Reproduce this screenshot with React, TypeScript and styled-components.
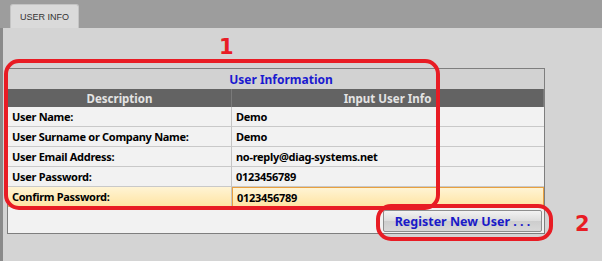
import React from 'react';
import styled, { createGlobalStyle } from 'styled-components';

const GlobalStyle = createGlobalStyle`
  html, body {
    margin: 0;
    padding: 0;
    background: #d4d4d4;
  }
`;

const rows = [
  { label: 'User Name:', value: 'Demo' },
  { label: 'User Surname or Company Name:', value: 'Demo' },
  { label: 'User Email Address:', value: 'no-reply@diag-systems.net' },
  { label: 'User Password:', value: '0123456789' },
  { label: 'Confirm Password:', value: '0123456789', active: true },
];

const Page = styled.div`
  position: relative;
  width: 602px;
  height: 261px;
  display: flex;
  flex-direction: column;
  background: #9d9d9d;
  font-family: 'Noto Sans', 'Open Sans', sans-serif;
  overflow: hidden;
`;

const TabBar = styled.div`
  height: 28px;
  display: flex;
  align-items: flex-end;
  padding-left: 10px;
  box-sizing: border-box;
`;

const Tab = styled.div`
  width: 69px;
  height: 24px;
  box-sizing: border-box;
  display: flex;
  align-items: center;
  justify-content: center;
  background: #dadada;
  border: 1px solid #c4c4c4;
  border-bottom: none;
  border-radius: 3px 3px 0 0;
  font-family: 'Liberation Sans', Arial, sans-serif;
  font-size: 9px;
  color: #333;
  padding-top: 1px;
`;

const Body = styled.div`
  flex: 1;
  background: #d4d4d4;
  border-left: 3px solid #8a8a8a;
  padding: 40px 0 0 4px;
`;

const Table = styled.div`
  width: 538px;
  box-sizing: border-box;
  border: 1px solid #7e7e7e;
  background: #f2f2f2;
`;

const TitleRow = styled.div`
  height: 20px;
  display: flex;
  align-items: center;
  justify-content: center;
  background: #d2d2d2;
  color: #1a1ad0;
  font-weight: bold;
  font-size: 12px;
  padding-left: 10px;
`;

const Grid = styled.div`
  display: grid;
  grid-template-columns: 224px 1fr;
`;

const HeadCell = styled.div`
  height: 18px;
  display: flex;
  align-items: center;
  justify-content: center;
  background: #636363;
  color: #e4e4e4;
  font-weight: bold;
  font-size: 11.5px;
  border-right: 1px solid #7a7a7a;
  &:last-child {
    border-right: none;
  }
`;

const Cell = styled.div<{ $active?: boolean; $value?: boolean }>`
  height: 20px;
  box-sizing: border-box;
  display: flex;
  align-items: center;
  padding-left: 4px;
  font-weight: bold;
  font-size: 11px;
  letter-spacing: -0.3px;
  color: #000;
  border-bottom: 1px solid ${(p) => (p.$active ? '#e2b870' : '#c9c9c9')};
  border-right: ${(p) => (p.$value ? 'none' : '1px solid #c4c4c4')};
  background: ${(p) =>
    p.$active ? 'linear-gradient(#fff4d4, #ffe4a4)' : '#f2f2f2'};
  ${(p) => (p.$active && p.$value ? 'border: 1px solid #e8a040;' : '')}
`;

const Footer = styled.div`
  height: 26px;
  display: flex;
  justify-content: flex-end;
  align-items: flex-start;
  padding: 3px 2px 0 0;
  box-sizing: border-box;
`;

const Button = styled.button`
  width: 159px;
  height: 22px;
  border: 1px solid #8e8e8e;
  border-radius: 2px;
  background: linear-gradient(#f2f2f2, #dcdcdc 50%, #cdcdcd 51%, #d8d8d8);
  color: #1a1ac8;
  font-family: 'Noto Sans', 'Open Sans', sans-serif;
  font-weight: bold;
  font-size: 12.5px;
  padding: 0;
`;

const Mark = styled.div<{ $l: number; $t: number; $w: number; $h: number }>`
  position: absolute;
  left: ${(p) => p.$l}px;
  top: ${(p) => p.$t}px;
  width: ${(p) => p.$w}px;
  height: ${(p) => p.$h}px;
  box-sizing: border-box;
  border: 4px solid #e81c24;
  border-radius: 15px;
  pointer-events: none;
`;

const Num = styled.div<{ $l: number; $t: number }>`
  position: absolute;
  left: ${(p) => p.$l}px;
  top: ${(p) => p.$t}px;
  color: #e81c24;
  font-family: 'DejaVu Sans', sans-serif;
  font-weight: bold;
  font-size: 21px;
  line-height: 1;
`;

export default function App() {
  return (
    <>
      <GlobalStyle />
      <Page>
        <TabBar>
          <Tab>USER INFO</Tab>
        </TabBar>
        <Body>
          <Table>
            <TitleRow>User Information</TitleRow>
            <Grid>
              <HeadCell>Description</HeadCell>
              <HeadCell>Input User Info</HeadCell>
              {rows.map((r) => (
                <React.Fragment key={r.label}>
                  <Cell $active={r.active}>{r.label}</Cell>
                  <Cell $active={r.active} $value>
                    {r.value}
                  </Cell>
                </React.Fragment>
              ))}
            </Grid>
            <Footer>
              <Button>Register New User . . .</Button>
            </Footer>
          </Table>
        </Body>
        <Mark $l={4} $t={59} $w={436} $h={151} />
        <Num $l={219} $t={37}>1</Num>
        <Mark $l={376} $t={204} $w={177} $h={37} />
        <Num $l={575} $t={214}>2</Num>
      </Page>
    </>
  );
}
